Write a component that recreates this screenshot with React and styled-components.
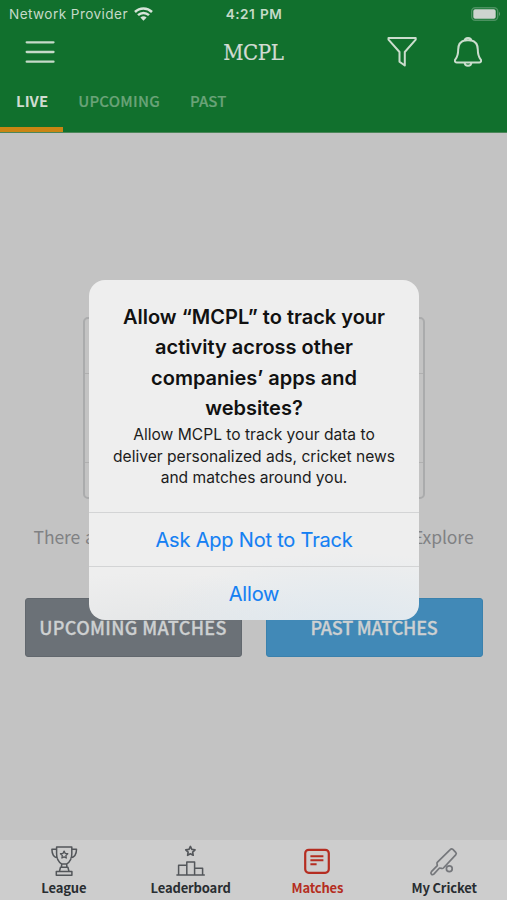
import React from "react";
import styled, { createGlobalStyle } from "styled-components";

const appFont = '"Noto Sans CJK SC", "Open Sans", sans-serif';
const systemFont = 'Inter, "Liberation Sans", sans-serif';

const GlobalStyle = createGlobalStyle`
  *, *::before, *::after { box-sizing: border-box; }
  body { margin: 0; background: #c3c3c3; }
  button { border: 0; background: none; padding: 0; margin: 0; font: inherit; color: inherit; }
  svg { display: block; }
`;

const Screen = styled.div`
  position: relative;
  display: flex;
  flex-direction: column;
  width: 507px;
  height: 900px;
  overflow: hidden;
  background: #c3c3c3;
  font-family: ${appFont};
  white-space: nowrap;
`;

const Header = styled.header`
  height: 133px;
  background: #11702d;
  color: #d3dbd3;
  border-bottom: 1px solid #4b8659;
`;

const StatusBar = styled.div`
  display: grid;
  grid-template-columns: 1fr auto 1fr;
  align-items: center;
  height: 27px;
  padding: 0 6px 0 9px;
  font-family: ${systemFont};
  font-size: 13.6px;
  color: #c5dac8;
`;

const Carrier = styled.div`
  display: flex;
  align-items: center;
  gap: 6px;
  letter-spacing: 0.42px;
`;

const Clock = styled.div`
  margin-right: 2px;
  font-weight: 600;
  letter-spacing: 0.5px;
  word-spacing: 0.8px;
`;

const Battery = styled.div`
  justify-self: end;
`;

const TitleBar = styled.div`
  display: grid;
  grid-template-columns: 1fr auto 1fr;
  align-items: center;
  height: 50px;
  padding: 0 25px 0 24px;
`;

const Title = styled.h1`
  margin: 0 0 1px;
  font-family: "DejaVu Serif", serif;
  font-weight: 400;
  font-size: 22.5px;
  line-height: 26px;
  letter-spacing: -0.4px;
  transform: scaleX(0.88);
  -webkit-text-stroke: 0.2px currentColor;
`;

const Actions = styled.div`
  display: flex;
  justify-content: flex-end;
  gap: 37px;
`;

const Tabs = styled.nav`
  display: flex;
  height: 55px;
`;

const Tab = styled.button`
  height: 55px;
  padding: 0 15px 7px;
  &:first-child { padding-left: 16px; }
  font-size: 15px;
  line-height: 48px;
  font-weight: ${(p) => (p.$active ? 700 : 500)};
  letter-spacing: ${(p) => p.$spacing}px;
  -webkit-text-stroke: ${(p) => (p.$active ? 0 : 0.2)}px currentColor;
  color: ${(p) => (p.$active ? "#d0dcd1" : "#6aa378")};
  border-bottom: 5px solid ${(p) => (p.$active ? "#ca8513" : "transparent")};
`;

const Content = styled.main`
  flex: 1;
  display: flex;
  flex-direction: column;
  align-items: center;
  padding-top: 184px;
`;

const EmptyCard = styled.div`
  display: grid;
  grid-template-rows: 55px 89px 1fr;
  width: 342px;
  height: 182px;
  border: 2px solid #aaabac;
  border-radius: 5px;
`;

const CardRow = styled.div`
  border-bottom: 1px solid #b0b0b0;
  &:last-child { border-bottom: 0; }
`;

const EmptyText = styled.p`
  width: 440px;
  margin: 23px 0 0;
  font-size: 17.5px;
  line-height: 30px;
  letter-spacing: -0.08px;
  color: #808183;
  text-align-last: justify;
`;

const ButtonRow = styled.div`
  display: flex;
  gap: 24px;
  margin-top: 46px;
`;

const MatchButton = styled.button`
  width: 217px;
  height: 59px;
  padding-bottom: 2px;
  border-radius: 3px;
  background: ${(p) => p.$color};
  border: 1px solid ${(p) => p.$edge};
  color: #cdd0d1;
  font-size: 18px;
  font-weight: 500;
  letter-spacing: ${(p) => p.$spacing}px;
  -webkit-text-stroke: 0.3px currentColor;
`;

const BottomNav = styled.nav`
  display: grid;
  grid-template-columns: repeat(4, 1fr);
  height: 60px;
  background: #cdcdcd;
`;

const NavItem = styled.button`
  display: flex;
  flex-direction: column;
  align-items: center;
  padding: 5px 0 0 1px;
  color: ${(p) => (p.$active ? "#b52d21" : "#53565a")};
`;

const NavLabel = styled.span`
  margin-top: 1px;
  font-size: 13px;
  line-height: 20px;
  font-weight: 700;
  letter-spacing: -0.15px;
  color: ${(p) => (p.$active ? "#b52d21" : "#292d31")};
`;

const Dialog = styled.section`
  position: absolute;
  left: 89px;
  top: 280px;
  width: 330px;
  height: 340px;
  display: flex;
  flex-direction: column;
  border-radius: 16px;
  overflow: hidden;
  background: radial-gradient(ellipse 210px 85px at 78% 105%, #dce7ef, #eeeeee00), radial-gradient(ellipse 190px 65px at 20% 105%, #e3e5e6, #eeeeee00), #eeeeee;
  font-family: ${systemFont};
  text-align: center;
`;

const DialogBody = styled.div`
  height: 232px;
  padding-top: 22px;
`;

const DialogTitle = styled.h2`
  margin: 0;
  font-size: 20px;
  line-height: 30.3px;
  font-weight: 600;
  color: #111;
`;

const TitleLine = styled.span`
  display: block;
`;

const DialogText = styled.p`
  margin: 0;
  padding-top: 0.8px;
  font-size: 15.6px;
  line-height: 21.6px;
  color: #1c1c1c;
`;

const DialogAction = styled.button`
  height: 54px;
  border-top: 1px solid #d3d4d5;
  font-size: 20px;
  letter-spacing: -0.2px;
  -webkit-text-stroke: 0.1px currentColor;
  color: #1480f3;
`;

const WifiIcon = () => (
  <svg width="19" height="14" viewBox="0 0 19 14" fill="none" stroke="#d7e4d9" strokeWidth="2.5">
    <path d="M1 5C5.8.3 13.2.3 18 5" />
    <path d="M4 8.2c3.2-3 7.8-3 11 0" />
    <path d="M6.4 10.6a4.5 4.5 0 0 1 6.2 0L9.5 13.8Z" fill="#d7e4d9" stroke="none" />
  </svg>
);

const BatteryIcon = () => (
  <svg width="30" height="14" viewBox="0 0 30 14">
    <rect x=".7" y=".7" width="26" height="12.6" rx="3.5" fill="none" stroke="#4b9160" strokeWidth="1.4" />
    <rect x="2.3" y="2.3" width="22.4" height="9.4" rx="1.8" fill="#ced4cf" />
    <path d="M28 4.8q2 2.2 0 4.4Z" fill="#61a073" />
  </svg>
);

const MenuIcon = () => (
  <svg width="32" height="26" viewBox="0 0 32 26" stroke="#c6dac9" strokeWidth="2.3" strokeLinecap="round">
    <path d="M2.7 3.3h26.8M2.7 13h26.8M2.7 22.7h26.8" />
  </svg>
);

const FilterIcon = () => (
  <svg width="30" height="32" viewBox="0 0 30 32" fill="none" stroke="#cbddcd" strokeWidth="2" strokeLinejoin="round">
    <path d="M1.5 2h27.2v1.7L17.8 16v13.5l-5.3-3.8V16L1.5 3.7Z" />
  </svg>
);

const BellIcon = () => (
  <svg width="28" height="32" viewBox="0 0 28 32" fill="none" stroke="#cbddcd" strokeWidth="2" strokeLinejoin="round">
    <path d="M11.2 4.2C6.6 5.2 4.2 9 4.2 13.5c0 6.2-1.5 8.2-2.8 9.8-1.1 1.5-.5 3.1 1.2 3.1h22.8c1.7 0 2.3-1.6 1.2-3.1-1.3-1.6-2.8-3.6-2.8-9.8 0-4.5-2.4-8.3-7-9.3" />
    <path d="M10.8 4.5c0-3.4 6.4-3.4 6.4 0M10.6 4.6c2-.5 4.8-.5 6.8 0M10.6 26.5c.2 4.4 6.6 4.4 6.8 0" />
  </svg>
);

const star = "m0-4.4 1.3 2.7 3 .4-2.2 2.1.5 3L0 2.4-2.6 3.8l.5-3-2.2-2.1 3-.4Z";

const TrophyIcon = () => (
  <svg width="30" height="32" viewBox="0 0 30 32" fill="none" stroke="currentColor" strokeWidth="1.5" strokeLinejoin="round">
    <path d="M7.6 2h15.2v6.7c0 5.3-2 8.3-5 10.1v3.5h-5.2v-3.5C9.6 17 7.6 14 7.6 8.7ZM7 4.3H2.9c0 5 2.3 8.2 5.9 8.7M23 4.3h4.5c0 5-2.5 8.2-6.1 8.7M12.4 19h5.2M10.4 26.5l1.1-4.2h7.4l1.1 4.2M7.3 30.3v-3.8h15.6v3.8Z" />
    <path transform="translate(15.1 9.8) scale(.85)" d={star} />
  </svg>
);

const PodiumIcon = () => (
  <svg width="30" height="32" viewBox="0 0 30 32" fill="none" stroke="currentColor" strokeWidth="1.5" strokeLinejoin="round">
    <path transform="translate(14.4 6.2) scale(1.08)" d={star} />
    <path d="M.4 30h28.4M2.6 30V20.3h8.2V30M10.8 30V17h7.8v13M18.6 23.3h8V30" />
  </svg>
);

const MatchesIcon = () => (
  <svg width="30" height="32" viewBox="0 0 30 32" fill="none" stroke="currentColor" strokeWidth="2.2">
    <rect x="3.2" y="4.8" width="23.6" height="23" rx="3.5" />
    <path d="M8.4 11.3h13M8.4 15.3h13M8.4 19.2h6.2" strokeWidth="2" />
  </svg>
);

const CricketIcon = () => (
  <svg width="30" height="32" viewBox="0 0 30 32" fill="none" stroke="#75777b" strokeWidth="1.7" strokeLinejoin="round">
    <path d="M21.2 4.6q1.3-1.4 2.7-.2l2.8 2.9q1.2 1.2 0 2.5L14.4 23q-.8.8-1.9.3l-2-.3-5.7 6.1q-1.3 1.1-2.4 0-1.1-1.2 0-2.4l5.9-6-.3-2q-.2-.8.5-1.5Z" />
    <circle cx="20.3" cy="23.8" r="2.9" />
  </svg>
);

const navItems = [
  { label: "League", Icon: TrophyIcon },
  { label: "Leaderboard", Icon: PodiumIcon },
  { label: "Matches", Icon: MatchesIcon, active: true },
  { label: "My Cricket", Icon: CricketIcon },
];

const titleLines = [
  "Allow “MCPL” to track your",
  "activity across other",
  "companies’ apps and",
  "websites?",
];

export default function App() {
  return (
    <>
      <GlobalStyle />
      <Screen>
        <Header>
          <StatusBar>
            <Carrier>Network Provider <WifiIcon /></Carrier>
            <Clock>4:21 PM</Clock>
            <Battery><BatteryIcon /></Battery>
          </StatusBar>
          <TitleBar>
            <MenuIcon />
            <Title>MCPL</Title>
            <Actions><FilterIcon /><BellIcon /></Actions>
          </TitleBar>
          <Tabs>
            <Tab $active $spacing={0}>LIVE</Tab>
            <Tab $spacing={0.25}>UPCOMING</Tab>
            <Tab $spacing={0.1}>PAST</Tab>
          </Tabs>
        </Header>
        <Content>
          <EmptyCard><CardRow /><CardRow /><CardRow /></EmptyCard>
          <EmptyText>There are no live matches available right now. Explore</EmptyText>
          <ButtonRow>
            <MatchButton $color="#6b7177" $edge="#62686e" $spacing={0.35}>UPCOMING MATCHES</MatchButton>
            <MatchButton $color="#4189b7" $edge="#3a81ad" $spacing={-0.2}>PAST MATCHES</MatchButton>
          </ButtonRow>
        </Content>
        <BottomNav>
          {navItems.map(({ label, Icon, active }) => (
            <NavItem key={label} $active={active}>
              <Icon />
              <NavLabel $active={active}>{label}</NavLabel>
            </NavItem>
          ))}
        </BottomNav>
        <Dialog role="dialog">
          <DialogBody>
            <DialogTitle>
              {titleLines.map((line) => (
                <TitleLine key={line}>{line}</TitleLine>
              ))}
            </DialogTitle>
            <DialogText>
              Allow MCPL to track your data to<br />
              deliver personalized ads, cricket news<br />
              and matches around you.
            </DialogText>
          </DialogBody>
          <DialogAction>Ask App Not to Track</DialogAction>
          <DialogAction>Allow</DialogAction>
        </Dialog>
      </Screen>
    </>
  );
}
